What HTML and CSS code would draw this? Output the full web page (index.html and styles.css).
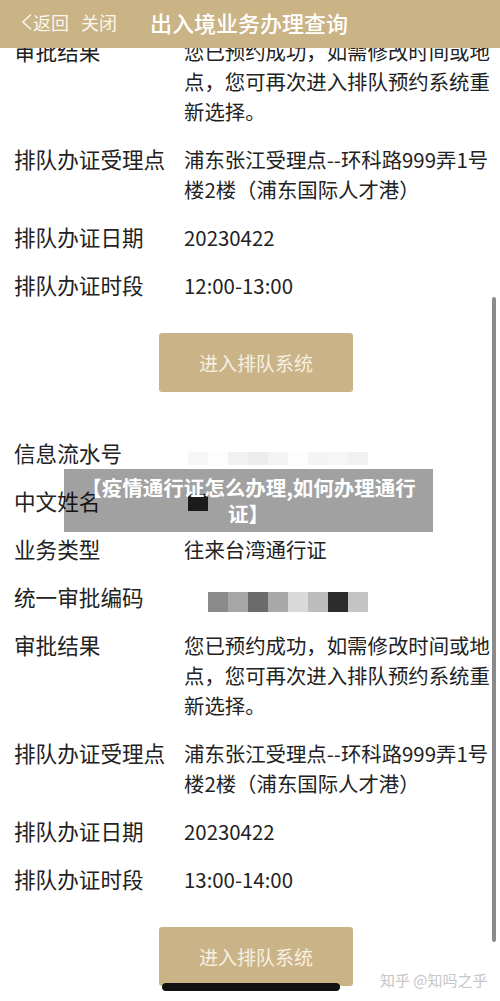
FILE: index.html
```html
<!DOCTYPE html>
<html lang="zh-CN">
<head>
    <meta charset="UTF-8">
    <meta name="viewport" content="width=device-width, initial-scale=1.0">
    <title>出入境业务办理查询</title>
    <link rel="stylesheet" href="styles.css">
</head>
<body>
    <header class="topbar">
        <div class="topbar-links">
            <span class="back">
                <svg class="back-icon" width="12" height="18" viewBox="0 0 12 18">
                    <polyline points="10,1.5 2,9 10,16.5" fill="none" stroke="#fbf6ec" stroke-width="1.6" stroke-linejoin="miter"/>
                </svg>返回
            </span>
            <span class="close">关闭</span>
        </div>
        <h1 class="title">出入境业务办理查询</h1>
    </header>

    <main class="page">
        <!-- first record, partly scrolled under the bar -->
        <section class="record">
            <div class="row">
                <div class="label">审批结果</div>
                <div class="value">您已预约成功，如需修改时间或地点，您可再次进入排队预约系统重新选择。</div>
            </div>
            <div class="row">
                <div class="label">排队办证受理点</div>
                <div class="value">浦东张江受理点--环科路999弄1号楼2楼（浦东国际人才港）</div>
            </div>
            <div class="row">
                <div class="label">排队办证日期</div>
                <div class="value">20230422</div>
            </div>
            <div class="row">
                <div class="label">排队办证时段</div>
                <div class="value">12:00-13:00</div>
            </div>
            <div class="actions">
                <button class="queue-btn">进入排队系统</button>
            </div>
        </section>

        <!-- second record -->
        <section class="record">
            <div class="row">
                <div class="label">信息流水号</div>
                <div class="value">
                    <div class="mosaic mosaic-faint">
                        <span class="f1"></span><span class="f2"></span><span class="f3"></span>
                        <span class="f4"></span><span class="f5"></span><span class="f2"></span>
                        <span class="f5"></span><span class="f1"></span><span class="f3"></span>
                    </div>
                </div>
            </div>
            <div class="row">
                <div class="label">中文姓名</div>
                <div class="value"><div class="mosaic mosaic-name"><span class="d1"></span></div></div>
            </div>
            <div class="row">
                <div class="label">业务类型</div>
                <div class="value">往来台湾通行证</div>
            </div>
            <div class="row">
                <div class="label">统一审批编码</div>
                <div class="value">
                    <div class="mosaic mosaic-code">
                        <span class="g1"></span><span class="g2"></span><span class="g3"></span>
                        <span class="g4"></span><span class="g5"></span><span class="g6"></span>
                        <span class="d1"></span><span class="g7"></span>
                    </div>
                </div>
            </div>
            <div class="row">
                <div class="label">审批结果</div>
                <div class="value">您已预约成功，如需修改时间或地点，您可再次进入排队预约系统重新选择。</div>
            </div>
            <div class="row">
                <div class="label">排队办证受理点</div>
                <div class="value">浦东张江受理点--环科路999弄1号楼2楼（浦东国际人才港）</div>
            </div>
            <div class="row">
                <div class="label">排队办证日期</div>
                <div class="value">20230422</div>
            </div>
            <div class="row">
                <div class="label">排队办证时段</div>
                <div class="value">13:00-14:00</div>
            </div>
            <div class="actions">
                <button class="queue-btn">进入排队系统</button>
            </div>
        </section>
    </main>

    <div class="scrollbar"></div>
    <div class="caption">【疫情通行证怎么办理,如何办理通行证】</div>
    <div class="watermark">知乎 @知吗之乎</div>
    <div class="home-bar"></div>
</body>
</html>
```

FILE: styles.css
```css
html, body {
    margin: 0;
    padding: 0;
    overflow: hidden;
}
body {
    width: 500px;
    height: 1001px;
    background: #fff;
    color: #222;
    font-family: "Noto Sans CJK SC", "Noto Sans", sans-serif;
}

/* top bar */
.topbar {
    position: fixed;
    top: 0;
    left: 0;
    right: 0;
    z-index: 5;
    height: 48px;
    display: flex;
    align-items: center;
    padding: 0 0 4px 21px;
    box-sizing: border-box;
    background: #cab385;
    color: #fbf6ec;
}
.topbar-links {
    display: flex;
    align-items: center;
    gap: 12px;
    font-size: 18px;
    width: 129px;
}
.back {
    display: flex;
    align-items: center;
}
.back-icon {
    margin-right: 0;
}
.title {
    margin: 0;
    font-size: 22px;
    font-weight: 500;
    color: #fff;
    letter-spacing: 0;
}

/* records */
.page {
    padding-top: 27px;
}
.record + .record {
    margin-top: 37px;
}
.row {
    display: grid;
    grid-template-columns: 170px 1fr;
    padding: 9px 8px 9px 14px;
}
.label {
    font-size: 21.6px;
    line-height: 30px;
    white-space: nowrap;
}
.value {
    font-size: 20.4px;
    line-height: 30px;
}
.actions {
    display: flex;
    justify-content: center;
    padding-left: 12px;
    margin-top: 24px;
}
.queue-btn {
    width: 194px;
    height: 59px;
    border: none;
    border-radius: 3px;
    background: #cab487;
    color: #f7f0e2;
    font-family: inherit;
    font-size: 19px;
}

/* blurred values */
.mosaic {
    display: flex;
}
.mosaic span {
    width: 20px;
}
.mosaic-faint {
    margin: 14px 0 0 4px;
    height: 13px;
}
.mosaic-name {
    margin: 8px 0 0 4px;
    height: 17px;
}
.mosaic-code {
    margin: 10px 0 0 24px;
    height: 20px;
}
.f1 { background: #f6f6f6; }
.f2 { background: #fdfdfd; }
.f3 { background: #f1f1f1; }
.f4 { background: #ececec; }
.f5 { background: #f4f4f4; }
.d1 { background: #2c2c2c; }
.g1 { background: #8a8a8a; }
.g2 { background: #a6a6a6; }
.g3 { background: #6b6b6b; }
.g4 { background: #a9a9a9; }
.g5 { background: #d9d9d9; }
.g6 { background: #bcbcbc; }
.g7 { background: #c4c4c4; }

/* overlays */
.scrollbar {
    position: absolute;
    left: 492px;
    top: 297px;
    width: 4px;
    height: 645px;
    border-radius: 2px;
    background: #8b8b8b;
}
.caption {
    position: absolute;
    left: 64px;
    top: 469px;
    width: 369px;
    height: 63px;
    box-sizing: border-box;
    padding: 5px 10px 0;
    background: rgba(0, 0, 0, 0.37);
    color: #fff;
    font-size: 20.5px;
    font-weight: 700;
    line-height: 26px;
    text-align: center;
}
.watermark {
    position: absolute;
    left: 380px;
    top: 970px;
    font-size: 15px;
    line-height: 20px;
    color: #c6c6c6;
    white-space: nowrap;
}
.home-bar {
    position: absolute;
    left: 162px;
    top: 983px;
    width: 178px;
    height: 8px;
    border-radius: 4px;
    background: #111;
}
```
